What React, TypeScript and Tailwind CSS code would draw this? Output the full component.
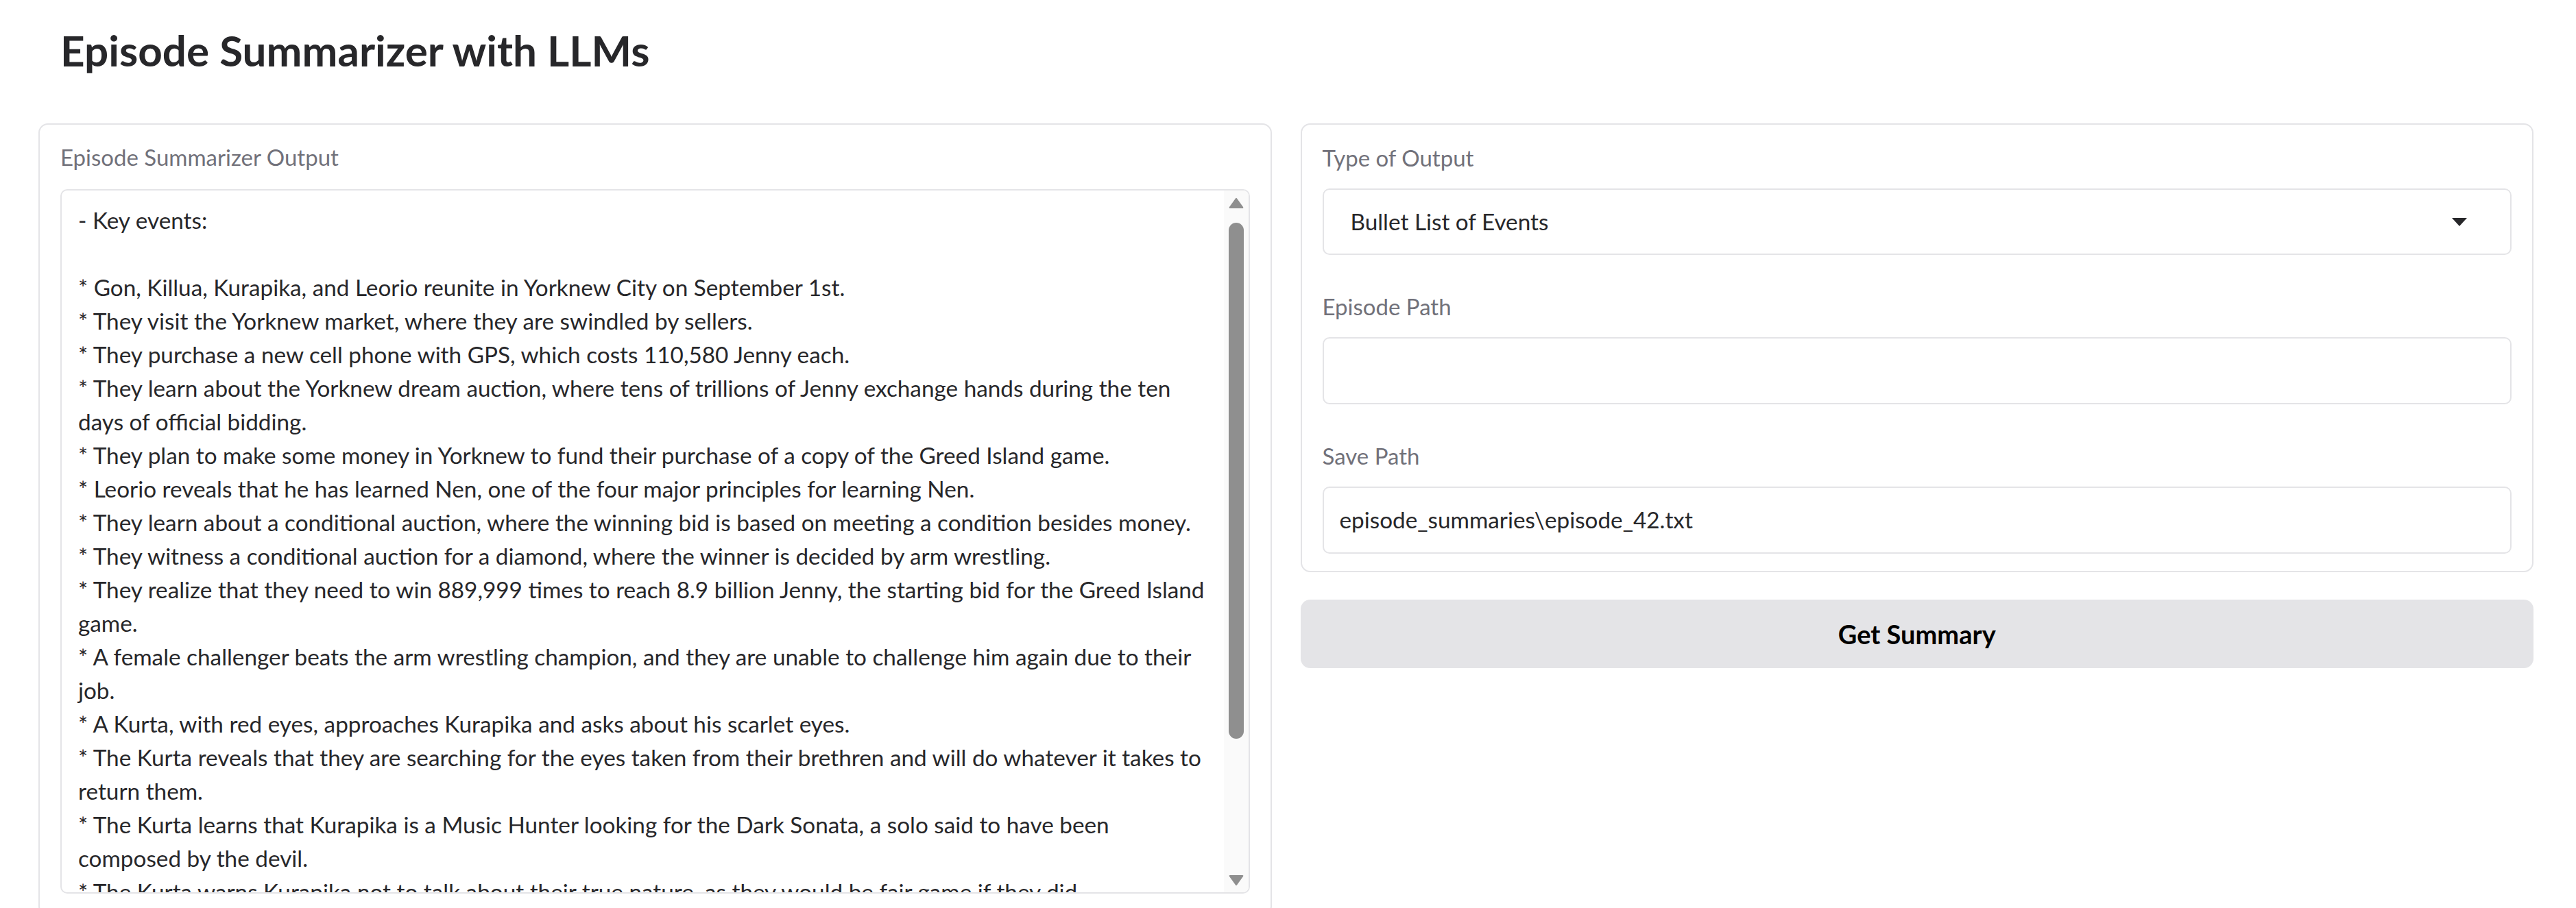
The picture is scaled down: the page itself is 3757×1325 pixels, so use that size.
const summaryLines = [
  "- Key events:",
  "",
  "* Gon, Killua, Kurapika, and Leorio reunite in Yorknew City on September 1st.",
  "* They visit the Yorknew market, where they are swindled by sellers.",
  "* They purchase a new cell phone with GPS, which costs 110,580 Jenny each.",
  "* They learn about the Yorknew dream auction, where tens of trillions of Jenny exchange hands during the ten",
  "days of official bidding.",
  "* They plan to make some money in Yorknew to fund their purchase of a copy of the Greed Island game.",
  "* Leorio reveals that he has learned Nen, one of the four major principles for learning Nen.",
  "* They learn about a conditional auction, where the winning bid is based on meeting a condition besides money.",
  "* They witness a conditional auction for a diamond, where the winner is decided by arm wrestling.",
  "* They realize that they need to win 889,999 times to reach 8.9 billion Jenny, the starting bid for the Greed Island",
  "game.",
  "* A female challenger beats the arm wrestling champion, and they are unable to challenge him again due to their",
  "job.",
  "* A Kurta, with red eyes, approaches Kurapika and asks about his scarlet eyes.",
  "* The Kurta reveals that they are searching for the eyes taken from their brethren and will do whatever it takes to",
  "return them.",
  "* The Kurta learns that Kurapika is a Music Hunter looking for the Dark Sonata, a solo said to have been",
  "composed by the devil.",
  "* The Kurta warns Kurapika not to talk about their true nature, as they would be fair game if they did.",
];

function ScrollArrow({ down = false }: { down?: boolean }) {
  return (
    <svg width="22" height="17" viewBox="0 0 22 17" className="shrink-0">
      <path
        d={down ? "M2 1 H20 Q22 1 21 3 L12 15.5 Q11 17 10 15.5 L1 3 Q0 1 2 1 Z" : "M2 16 H20 Q22 16 21 14 L12 1.5 Q11 0 10 1.5 L1 14 Q0 16 2 16 Z"}
        fill="#8f8f8f"
      />
    </svg>
  );
}

function FieldLabel({ children }: { children: string }) {
  return <span className="block text-[33px] leading-[49px] text-[#71717a]">{children}</span>;
}

export default function App() {
  return (
    <div className="h-[1325px] overflow-hidden bg-white pl-[56px] pr-[62px] font-['Lato',sans-serif] text-[#27272a]">
      <h1 className="pl-[32px] pt-[34px] text-[62px] font-bold leading-[78px] text-[#27272a]">
        Episode Summarizer with LLMs
      </h1>

      <div className="mt-[68px] grid grid-cols-2 items-start gap-[42px]">
        {/* output panel */}
        <div className="rounded-[14px] border-2 border-[#e4e4e7] px-[30px] pt-[23px] pb-[30px]">
          <FieldLabel>Episode Summarizer Output</FieldLabel>
          <div className="mt-[22px] flex h-[1028px] overflow-hidden rounded-[10px] border-2 border-[#e4e4e7]">
            <div className="min-w-0 flex-1 overflow-hidden pl-[24px] pt-[19px] text-[33.3px] leading-[49px]">
              {summaryLines.map((line, i) => (
                <div key={i} className="h-[49px] whitespace-nowrap">
                  {line}
                </div>
              ))}
            </div>
            <div className="flex w-[36px] shrink-0 flex-col items-center bg-[#fafafa] pt-[10px] pb-[9px]">
              <ScrollArrow />
              <div className="mt-[20px] h-[753px] w-[22px] rounded-full bg-[#8f8f8f]" />
              <div className="flex-1" />
              <ScrollArrow down />
            </div>
          </div>
        </div>

        {/* controls */}
        <div className="flex flex-col gap-[40px]">
          <div className="flex flex-col gap-[51px] rounded-[14px] border-2 border-[#e4e4e7] px-[30px] pt-[24px] pb-[25px]">
            <div>
              <FieldLabel>Type of Output</FieldLabel>
              <div className="mt-[20px] flex h-[97px] items-center justify-between rounded-[10px] border-2 border-[#e4e4e7] pl-[39px] pr-[63px]">
                <span className="text-[33.3px]">Bullet List of Events</span>
                <svg width="22" height="12" viewBox="0 0 22 12">
                  <path d="M0 0 H22 L11 12 Z" fill="#27272a" />
                </svg>
              </div>
            </div>
            <div>
              <FieldLabel>Episode Path</FieldLabel>
              <div className="mt-[20px] h-[98px] rounded-[10px] border-2 border-[#e4e4e7]" />
            </div>
            <div>
              <FieldLabel>Save Path</FieldLabel>
              <div className="mt-[20px] flex h-[98px] items-center rounded-[10px] border-2 border-[#e4e4e7] pl-[23px]">
                <span className="text-[33.3px]">episode_summaries\episode_42.txt</span>
              </div>
            </div>
          </div>
          <button className="h-[100px] rounded-[14px] bg-[#e4e4e7] text-[38px] font-bold text-black">
            Get Summary
          </button>
        </div>
      </div>
    </div>
  );
}
